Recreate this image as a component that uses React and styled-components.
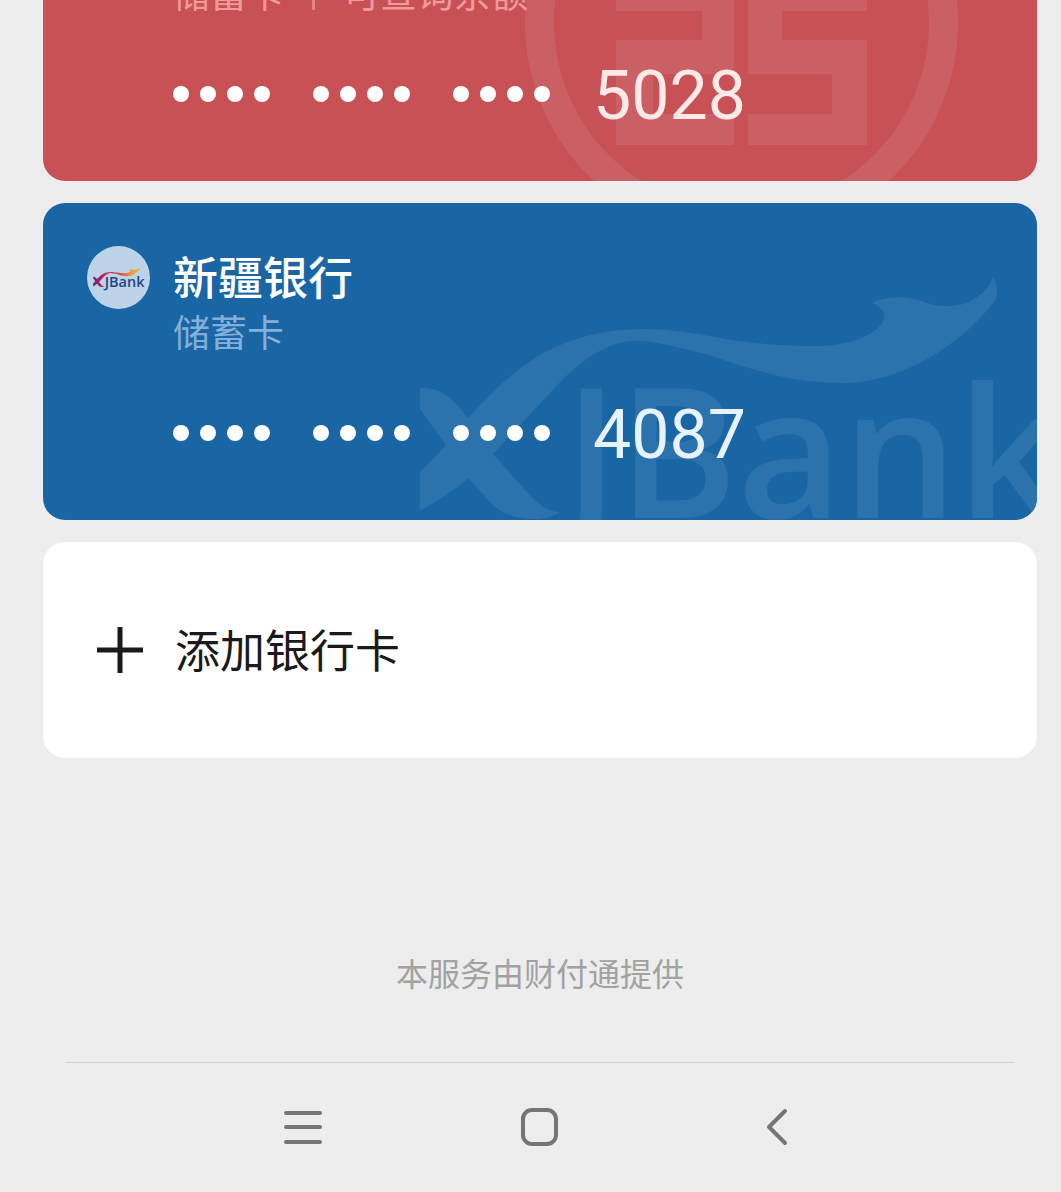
import React from "react";
import styled, { createGlobalStyle } from "styled-components";

const GlobalStyle = createGlobalStyle`
  * { box-sizing: border-box; }
  body {
    margin: 0;
    background: #ededed;
    font-family: "Noto Sans CJK SC", sans-serif;
  }
`;

const Screen = styled.main`
  display: flex;
  flex-direction: column;
  padding: 0 24px 0 43px;
  overflow: hidden;
`;

const CardList = styled.section`
  display: flex;
  flex-direction: column;
  gap: 22px;
`;

const Card = styled.article`
  position: relative;
  overflow: hidden;
  padding: ${(p) => (p.$scrolled ? "0 44px 55px" : "43px 44px 55px")};
  border-radius: ${(p) => (p.$scrolled ? "0 0 22px 22px" : "22px")};
  background: ${(p) => p.$bg};
  color: ${(p) => p.$tint};
`;

const Watermark = styled.svg`
  position: absolute;
  right: 0;
  bottom: 0;
`;

const CardGrid = styled.div`
  position: relative;
  display: grid;
  grid-template-columns: 63px 1fr;
  column-gap: 23px;
  margin-top: ${(p) => (p.$scrolled ? "-30px" : "0")};
`;

const Avatar = styled.svg`
  display: block;
  width: 63px;
  height: 63px;
  border-radius: 50%;
  background: #bcd3e8;
`;

const BankName = styled.h2`
  margin: 0;
  color: #fff;
  font-size: 45px;
  font-weight: 500;
  line-height: 60px;
`;

const CardType = styled.p`
  grid-column: 2;
  display: flex;
  align-items: center;
  gap: 28px;
  margin: 0;
  color: ${(p) => p.$color};
  font-size: 37px;
  line-height: 45px;
`;

const Bar = styled.span`
  width: 3px;
  height: 34px;
  background: currentColor;
  opacity: 0.7;
`;

const NumberRow = styled.div`
  grid-column: 2;
  display: flex;
  align-items: center;
  gap: 43px;
  height: 64px;
  margin-top: 47px;
`;

const DotGroup = styled.span`
  display: flex;
  gap: 11px;
`;

const Dot = styled.i`
  width: 16px;
  height: 16px;
  border-radius: 50%;
  background: #fff;
`;

const LastDigits = styled.span`
  padding-top: 4px;
  font-family: Roboto, sans-serif;
  font-size: 68px;
  line-height: 64px;
`;

const AddCard = styled.button`
  display: flex;
  align-items: center;
  gap: 22px;
  width: 100%;
  height: 216px;
  padding: 0 44px;
  border: 0;
  border-radius: 22px;
  background: #fff;
  color: #1a1a1a;
  font: 400 45px/64px "Noto Sans CJK SC", sans-serif;
`;

const AddLabel = styled.span`
  padding-bottom: 2px;
`;

const Provider = styled.p`
  margin: 190px 0 66px;
  color: #a2a2a2;
  font-size: 32px;
  line-height: 48px;
  text-align: center;
`;

const NavBar = styled.nav`
  display: grid;
  grid-template-columns: 1fr repeat(3, 2fr) 1fr;
  margin: 0 23px;
  padding: 40px 0;
  border-top: 1px solid #d4d4d4;

  &::before {
    content: "";
  }
`;

const NavButton = styled.button`
  display: flex;
  justify-content: center;
  padding: 0;
  border: 0;
  background: none;
  color: #757575;

  svg {
    width: 48px;
    height: 48px;
    fill: none;
    stroke: currentColor;
    stroke-width: 4;
    stroke-linecap: round;
    stroke-linejoin: round;
  }
`;

const MARK_PATH =
  "M420 388H425C445 389 456 403 468 418C509 374 552 329 645 329C670 329 700 334 715 337C745 343 780 346 817 346C848 346 871 336 881 325C888 315 884 308 872 303C886 296 910 296 923 302C940 308 964 308 977 297C986 291 990 285 993 277C998 285 999 297 993 303C965 340 905 383 843 383C775 383 735 361 690 350C665 344 650 341 636 341C600 341 570 371 550 393L493 454L526 491C538 505 549 512 560 512C553 517 545 519 535 519C513 519 500 512 492 504L468 478C455 490 437 502 420 510V472L446 445L420 409Z";

function XjBankMark({ markFill, textFill }) {
  return (
    <g>
      <path d={MARK_PATH} fill={markFill} />
      <text
        x="564"
        y="518"
        fill={textFill}
        fontFamily="Open Sans, sans-serif"
        fontSize="181"
        fontWeight="600"
      >
        JBank
      </text>
    </g>
  );
}

function XjBankWatermark() {
  return (
    <Watermark width="617" height="317" viewBox="420 203 617 317" aria-hidden="true">
      <XjBankMark markFill="#2c72ac" textFill="#2c72ac" />
    </Watermark>
  );
}

function IcbcWatermark() {
  return (
    <Watermark width="617" height="181" viewBox="420 0 617 181" aria-hidden="true">
      <circle cx="741.5" cy="22.5" r="202" fill="none" stroke="#ca6063" strokeWidth="29" />
      <path
        fill="#ca6063"
        d="M616 0H734V74H653V114H734V145H616V40H702V11H616ZM867 0H748V74H832V114H748V145H867V40H782V11H867Z"
      />
    </Watermark>
  );
}

function XjBankAvatar() {
  return (
    <Avatar viewBox="0 0 63 63" role="img" aria-label="新疆银行">
      <defs>
        <linearGradient id="flame" x1="0" x2="1">
          <stop offset="0" stopColor="#5b2f8c" />
          <stop offset="0.2" stopColor="#c2204f" />
          <stop offset="0.6" stopColor="#dc4a3c" />
          <stop offset="0.85" stopColor="#f4a13c" />
        </linearGradient>
      </defs>
      <g transform="translate(-27.4 -0.4) scale(0.08)">
        <XjBankMark markFill="url(#flame)" textFill="#1d4685" />
      </g>
    </Avatar>
  );
}

function CardNumber({ digits }) {
  return (
    <NumberRow>
      {[0, 1, 2].map((group) => (
        <DotGroup key={group}>
          {[0, 1, 2, 3].map((dot) => (
            <Dot key={dot} />
          ))}
        </DotGroup>
      ))}
      <LastDigits>{digits}</LastDigits>
    </NumberRow>
  );
}

export default function App() {
  return (
    <>
      <GlobalStyle />
      <Screen>
        <CardList>
          <Card $bg="#c75155" $tint="#fee9e9" $scrolled>
            <IcbcWatermark />
            <CardGrid $scrolled>
              <CardType $color="#f09a9c">
                <span>储蓄卡</span>
                <Bar />
                <span>可查询余额</span>
              </CardType>
              <CardNumber digits="5028" />
            </CardGrid>
          </Card>
          <Card $bg="#1a66a5" $tint="#e6f3fd">
            <XjBankWatermark />
            <CardGrid>
              <XjBankAvatar />
              <BankName>新疆银行</BankName>
              <CardType $color="#82b0da">
                <span>储蓄卡</span>
              </CardType>
              <CardNumber digits="4087" />
            </CardGrid>
          </Card>
          <AddCard type="button">
            <svg width="66" height="66" viewBox="0 0 66 66" aria-hidden="true">
              <path d="M10 33H56M33 10V56" stroke="currentColor" strokeWidth="5" />
            </svg>
            <AddLabel>添加银行卡</AddLabel>
          </AddCard>
        </CardList>
        <Provider>本服务由财付通提供</Provider>
        <NavBar>
          <NavButton type="button" aria-label="菜单">
            <svg viewBox="0 0 48 48">
              <path d="M7 10H41M7 24H41M7 39H41" />
            </svg>
          </NavButton>
          <NavButton type="button" aria-label="主页">
            <svg viewBox="0 0 48 48">
              <rect x="7" y="7" width="33" height="34" rx="9" />
            </svg>
          </NavButton>
          <NavButton type="button" aria-label="返回">
            <svg viewBox="0 0 48 48">
              <path d="M32 8L16 24L32 40" />
            </svg>
          </NavButton>
        </NavBar>
      </Screen>
    </>
  );
}
